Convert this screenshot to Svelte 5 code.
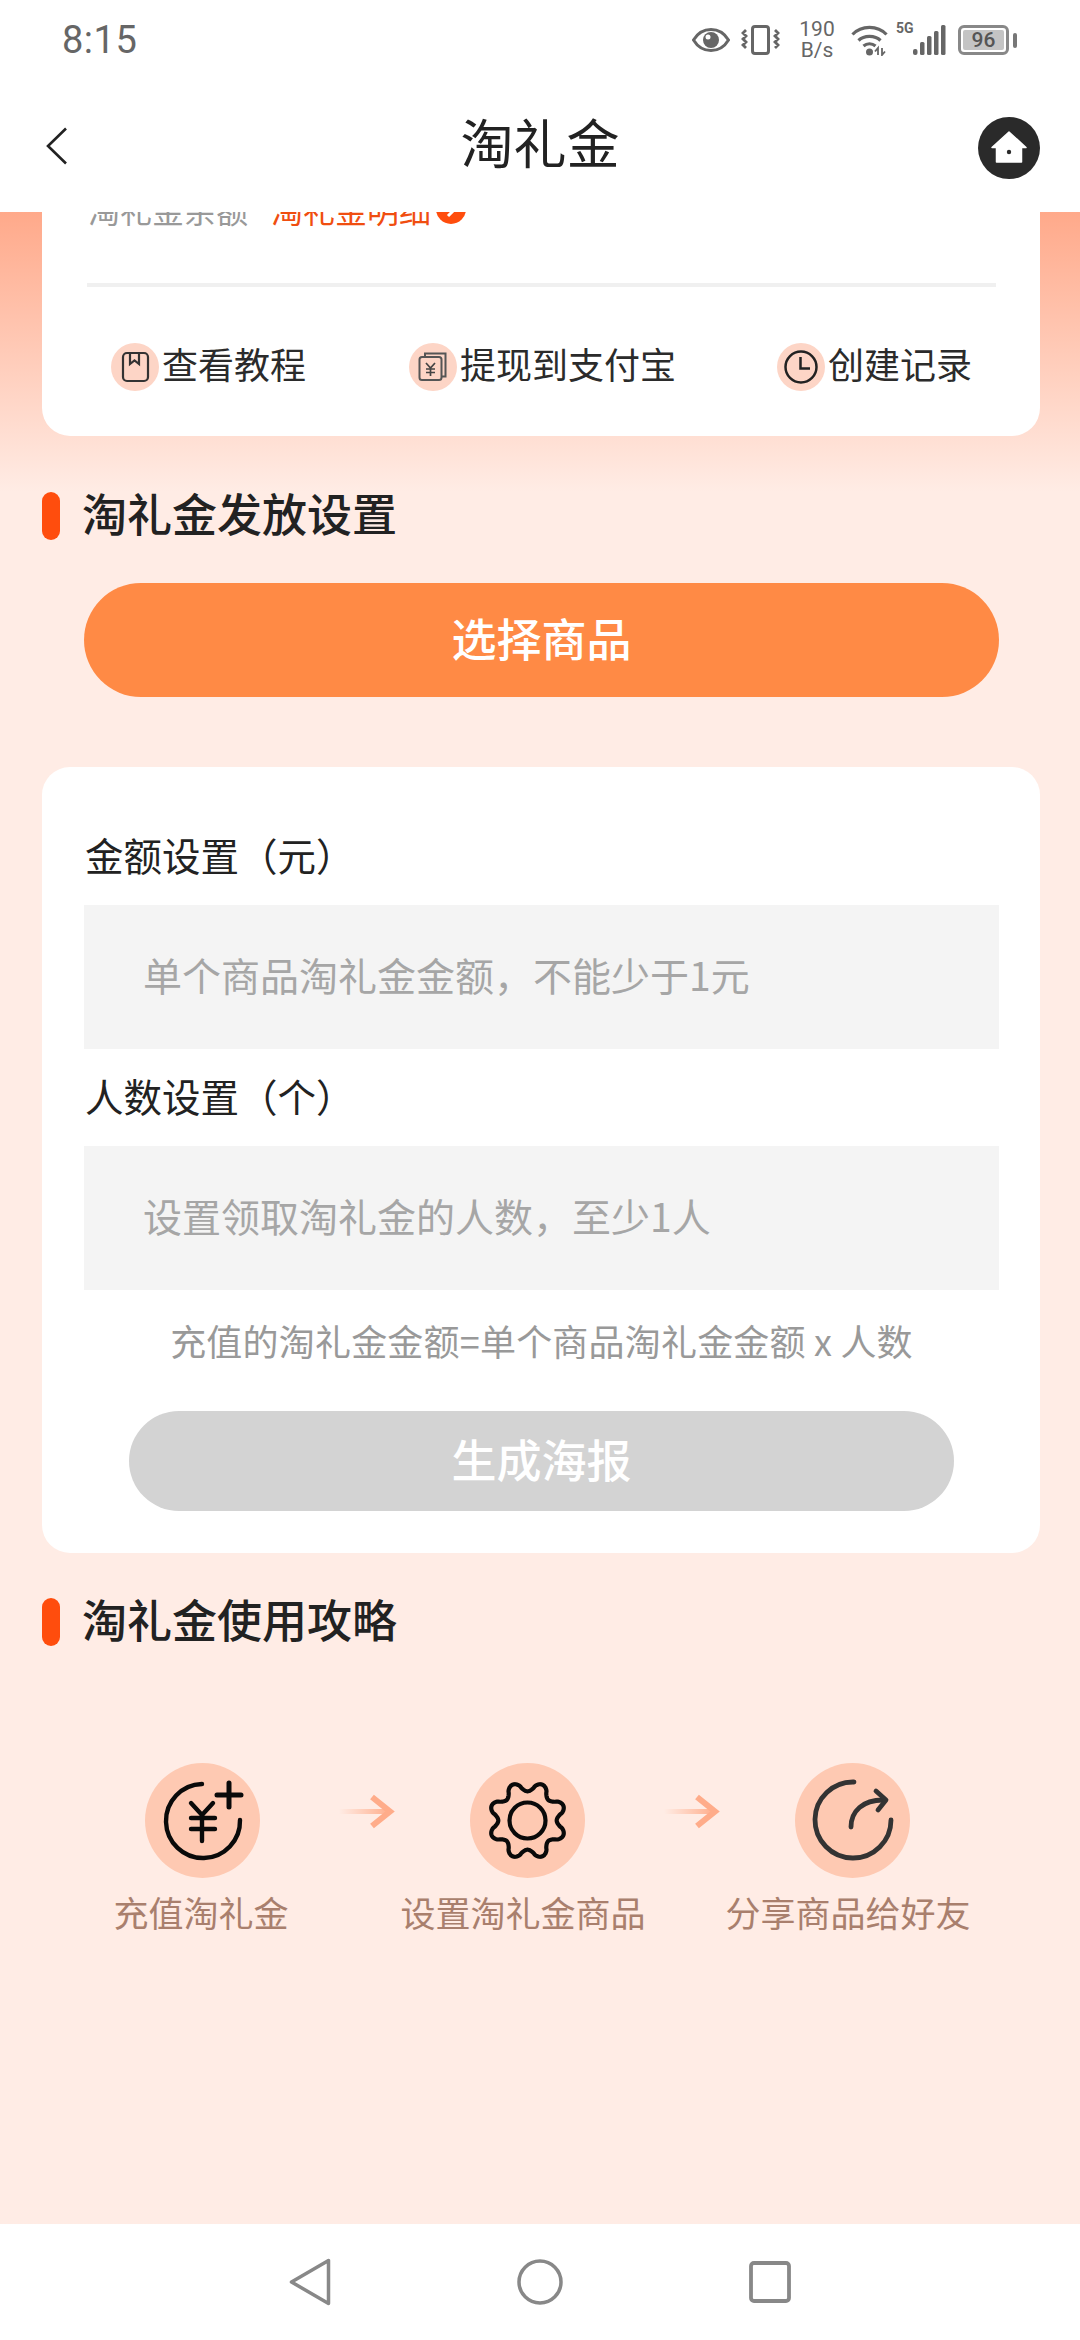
<script>
  const gearPoints = [];
  for (let i = 0; i < 240; i++) {
    const t = (i / 240) * Math.PI * 2;
    const c = Math.cos(8 * (t - Math.PI / 8));
    const r = 34 + 4.8 * Math.sign(c) * Math.pow(Math.abs(c), 0.75);
    gearPoints.push(`${(57.5 + r * Math.cos(t)).toFixed(2)} ${(57.5 + r * Math.sin(t)).toFixed(2)}`);
  }
  const gear = 'M' + gearPoints.join('L') + 'Z';
</script>

<div class="page">
  <header class="top">
    <div class="status">
      <span class="time">8:15</span>
      <div class="sys">
        <svg class="eye" viewBox="0 0 38 24" width="38" height="24"><path d="M1.5 12C6 4.5 12 1.5 19 1.5S32 4.500 36.500 12C32 19.500 26 22.500 19 22.500S6 19.500 1.500 12Z" fill="none" stroke="#666" stroke-width="3"/><circle cx="19" cy="12" r="8" fill="#666"/><circle cx="16" cy="9" r="2.500" fill="#fff"/></svg>
        <svg class="vib" viewBox="0 0 39 30" width="39" height="30"><rect x="11.500" y="1.500" width="16" height="27" rx="2.500" fill="none" stroke="#666" stroke-width="3"/><path d="M5 5l-3 3 3 3-3 3 3 3-3 3 3 3M34 5l3 3-3 3 3 3-3 3 3 3-3 3" fill="none" stroke="#666" stroke-width="2.800"/></svg>
        <div class="speed"><span>190</span><span>B/s</span></div>
        <svg class="wifi" viewBox="0 0 37 31" width="37" height="31"><path d="M1.500 9.500C10.500 0 26.500 0 35.500 9.500M7.500 15.500C13 10 24 10 29.500 15.500M12.500 21C16 18 21 18 24.500 21" fill="none" stroke="#666" stroke-width="3.200"/><circle cx="18.500" cy="27" r="3.500" fill="#666"/><path d="M27 30V23l-3 3.500M31 23v7l3-3.500" fill="none" stroke="#666" stroke-width="1.800"/></svg>
        <span class="five">5G</span>
        <svg class="signal" viewBox="0 0 33 30" width="33" height="30"><g fill="#666"><rect x="0" y="24" width="4.500" height="6" rx="2"/><rect x="7" y="17" width="4.500" height="13" rx="1.500"/><rect x="14" y="11" width="4.500" height="19" rx="1.500"/><rect x="21" y="6" width="4.500" height="24" rx="1.500"/><rect x="28" y="0" width="4.500" height="30" rx="1.500"/></g></svg>
        <div class="battery"><span>96</span></div>
        <i class="tip"></i>
      </div>
    </div>
    <nav class="bar">
      <svg class="back" viewBox="0 0 22 38" width="22" height="38"><path d="M20 1.500L2 19l18 17.500" fill="none" stroke="#222" stroke-width="2.600"/></svg>
      <h1>淘礼金</h1>
      <svg class="home" viewBox="0 0 62 62" width="62" height="62"><circle cx="31" cy="31" r="31" fill="#2a2a2a"/><path d="M31 15L48 30.500H43.500V45H18.500V30.500H14Z" fill="#fff" stroke="#fff" stroke-width="1.500" stroke-linejoin="round"/><circle cx="31" cy="35" r="2.200" fill="#2a2a2a"/></svg>
    </nav>
  </header>

  <main class="content">
    <section class="card balance">
      <div class="ledger">
        <span class="muted">淘礼金余额</span>
        <span class="link">淘礼金明细</span>
        <svg class="go" viewBox="0 0 30 30" width="30" height="30"><circle cx="15" cy="15" r="15" fill="#ff4d0d"/><path d="M12 8l7 7-7 7" fill="none" stroke="#fff" stroke-width="3"/></svg>
      </div>
      <div class="divider"></div>
      <div class="actions">
        <div class="action first">
          <svg viewBox="0 0 48 48" width="48" height="48"><circle cx="24" cy="24" r="24" fill="#fdd5c6"/><rect x="12" y="10" width="25" height="28" rx="4" fill="none" stroke="#333" stroke-width="2.200"/><path d="M19 10v11l4.500-3.500 4.500 3.500V10" fill="none" stroke="#333" stroke-width="2.200"/></svg>
          <span>查看教程</span>
        </div>
        <div class="action second">
          <svg viewBox="0 0 48 48" width="48" height="48"><circle cx="24" cy="24" r="24" fill="#fdd5c6"/><rect x="10.500" y="14" width="22" height="23" rx="2.500" fill="none" stroke="#555" stroke-width="2"/><path d="M16 14v-3.500h20.500v23H32.500" fill="none" stroke="#555" stroke-width="2"/><path d="M17 20l4.500 5 4.500-5M21.500 25v8M17 26h9M17 29.500h9" fill="none" stroke="#444" stroke-width="1.700"/></svg>
          <span>提现到支付宝</span>
        </div>
        <div class="action third">
          <svg viewBox="0 0 48 48" width="48" height="48"><circle cx="24" cy="24" r="24" fill="#fdd5c6"/><circle cx="24" cy="24" r="15.500" fill="none" stroke="#222" stroke-width="2.500"/><path d="M23.500 14v11.500H33" fill="none" stroke="#222" stroke-width="2.500"/></svg>
          <span>创建记录</span>
        </div>
      </div>
    </section>

    <h2 class="heading first-heading">淘礼金发放设置</h2>
    <button class="pick">选择商品</button>

    <section class="card form">
      <p class="label">金额设置（元）</p>
      <div class="field">单个商品淘礼金金额，不能少于1元</div>
      <p class="label second-label">人数设置（个）</p>
      <div class="field">设置领取淘礼金的人数，至少1人</div>
      <p class="hint">充值的淘礼金金额=单个商品淘礼金金额 x 人数</p>
      <button class="make">生成海报</button>
    </section>

    <h2 class="heading second-heading">淘礼金使用攻略</h2>

    <div class="steps">
      <div class="step">
        <svg viewBox="0 0 115 115" width="115" height="115"><circle cx="57.500" cy="57.500" r="57.500" fill="#fec9b2"/><g fill="none" stroke="#0a0a0a" stroke-width="4.400" stroke-linecap="round"><path d="M57 21A37 37 0 1 0 95 57"/><path d="M46 40L57 52L68 40M57 52V78M46 55H70M46 66H70"/><path d="M72 32H96M84 20V44" stroke-width="5"/></g></svg>
        <span>充值淘礼金</span>
      </div>
      <svg class="arrow" viewBox="0 0 56 36" width="56" height="36"><defs><linearGradient id="fade"><stop offset="0" stop-color="#ffac8a" stop-opacity="0"/><stop offset="1" stop-color="#ffac8a"/></linearGradient></defs><rect x="0" y="15" width="52" height="5" fill="url(#fade)"/><path d="M33 3L51 17.500L33 32" fill="none" stroke="#ffac8a" stroke-width="6"/></svg>
      <div class="step shifted">
        <svg viewBox="0 0 115 115" width="115" height="115"><circle cx="57.500" cy="57.500" r="57.500" fill="#fec9b2"/><path d={gear} fill="none" stroke="#0a0a0a" stroke-width="4.200" stroke-linejoin="round"/><circle cx="57.500" cy="57.500" r="18" fill="none" stroke="#0a0a0a" stroke-width="4.200"/></svg>
        <span>设置淘礼金商品</span>
      </div>
      <svg class="arrow" viewBox="0 0 56 36" width="56" height="36"><rect x="0" y="15" width="52" height="5" fill="url(#fade)"/><path d="M33 3L51 17.500L33 32" fill="none" stroke="#ffac8a" stroke-width="6"/></svg>
      <div class="step shifted">
        <svg viewBox="0 0 115 115" width="115" height="115"><circle cx="57.500" cy="57.500" r="57.500" fill="#fec9b2"/><g fill="none" stroke="#333" stroke-width="4.800" stroke-linecap="round"><path d="M59 19A38 38 0 1 0 96 57"/><path d="M56 64C56 48 68 37 88 37"/><path d="M81 28L91 37L83 47" stroke-linejoin="round"/></g></svg>
        <span>分享商品给好友</span>
      </div>
    </div>
  </main>

  <footer class="softkeys">
    <svg viewBox="0 0 42 48" width="42" height="48"><path d="M39.500 2.500V45.500L2.500 24Z" fill="none" stroke="#888" stroke-width="3.500" stroke-linejoin="round"/></svg>
    <svg viewBox="0 0 46 46" width="46" height="46"><circle cx="23" cy="23" r="21" fill="none" stroke="#888" stroke-width="3.500"/></svg>
    <svg viewBox="0 0 42 44" width="42" height="44"><rect x="2" y="3" width="38" height="38" rx="3" fill="none" stroke="#888" stroke-width="3.800"/></svg>
  </footer>
</div>

<style>
  :global(body) {
    margin: 0;
    background: #fff;
  }
  .page {
    width: 1080px;
    height: 2340px;
    display: flex;
    flex-direction: column;
    overflow: hidden;
    font-family: "Noto Sans CJK SC", "Noto Sans", sans-serif;
    color: #222;
  }
  .top {
    height: 212px;
    flex: none;
    background: #fff;
    position: relative;
    z-index: 2;
  }
  .status {
    height: 80px;
    display: flex;
    align-items: center;
    justify-content: space-between;
    padding: 0 63px 0 62px;
    box-sizing: border-box;
  }
  .time {
    font: 38px Roboto, sans-serif;
    color: #666;
    letter-spacing: 0.5px;
  }
  .sys {
    display: flex;
    align-items: center;
    height: 40px;
    color: #666;
  }
  .sys svg { display: block; flex: none; }
  .vib { margin-left: 11px; }
  .speed {
    margin-left: 18px;
    width: 38px;
    display: flex;
    flex-direction: column;
    align-items: center;
    font: 21px/21px Roboto, sans-serif;
  }
  .wifi { margin-left: 15px; }
  .five {
    margin-left: 8px;
    align-self: flex-start;
    font: bold 14px/16px Roboto, sans-serif;
    width: 17px;
  }
  .battery {
    margin-left: 12px;
    width: 51px;
    height: 30px;
    box-sizing: border-box;
    border: 3px solid #888;
    border-radius: 6px;
    padding: 2px;
    display: flex;
  }
  .battery span {
    flex: 1;
    background: #c4c4c4;
    border-radius: 2px;
    font: 500 21px/20px Roboto, sans-serif;
    text-align: center;
    color: #555;
  }
  .tip {
    margin-left: 4px;
    width: 4px;
    height: 15px;
    background: #777;
    border-radius: 2px;
  }
  .bar {
    height: 132px;
    display: flex;
    align-items: center;
    justify-content: space-between;
    padding: 0 40px 0 46px;
    position: relative;
  }
  .home { margin-top: 4px; }
  h1 {
    position: absolute;
    left: 0;
    right: 0;
    top: 26px;
    margin: 0;
    text-align: center;
    font-size: 53px;
    line-height: 70px;
    font-weight: 400;
    color: #222;
  }
  .content {
    flex: 1;
    min-height: 0;
    overflow: hidden;
    background: linear-gradient(#ffa98a 0, #ffece5 280px);
    padding: 0 40px 0 42px;
  }
  .card {
    background: #fff;
    border-radius: 28px;
  }
  .balance {
    margin-top: -60px;
    height: 284px;
    box-sizing: border-box;
    padding: 17px 44px 0 45px;
  }
  .ledger {
    height: 40px;
    display: flex;
    align-items: center;
    font-size: 32px;
    line-height: 40px;
    margin: 20px 0 0 1px;
  }
  .muted { color: #999; }
  .link { color: #f04e10; margin-left: 23px; }
  .go { margin-left: 5px; }
  .divider {
    margin-top: 54px;
    height: 4px;
    background: #f0f0f0;
  }
  .actions {
    display: flex;
    margin-top: 56px;
    height: 48px;
  }
  .action {
    display: flex;
    align-items: center;
    gap: 3px;
    font-size: 36px;
    line-height: 48px;
    color: #2b2b2b;
  }
  .action svg { flex: none; }
  .action span { padding-bottom: 8px; }
  .first { margin-left: 24px; }
  .second { margin-left: 103px; }
  .third { margin-left: 101px; }
  .heading {
    margin: 0;
    height: 48px;
    display: flex;
    align-items: center;
    font-size: 45px;
    font-weight: 500;
    line-height: 42px;
    color: #222;
    padding-left: 40px;
    padding-bottom: 6px;
    box-sizing: border-box;
    position: relative;
  }
  .heading::before {
    content: "";
    position: absolute;
    left: 0;
    top: 0;
    width: 18px;
    height: 48px;
    border-radius: 9px;
    background: #ff4d0d;
  }
  .first-heading { margin-top: 56px; }
  .second-heading { margin-top: 45px; }
  button {
    display: block;
    border: 0;
    padding: 0 0 5px;
    font-family: inherit;
    color: #fff;
    font-weight: 500;
    font-size: 45px;
    text-align: center;
  }
  .pick {
    margin: 43px 0 0 42px;
    width: 915px;
    height: 114px;
    border-radius: 57px;
    background: #ff8a45;
  }
  .form {
    margin-top: 70px;
    height: 786px;
    box-sizing: border-box;
    padding: 65px 41px 0 42px;
  }
  .label {
    margin: 0 0 23px 1px;
    font-size: 38.500px;
    line-height: 44px;
    height: 50px;
    color: #222;
  }
  .second-label { margin-top: 24px; }
  .field {
    height: 144px;
    padding-left: 59px;
    background: #f4f4f4;
    font-size: 39px;
    line-height: 138px;
    color: #a6a6a6;
  }
  .hint {
    margin: 28px 0 0;
    text-align: center;
    font-size: 36px;
    letter-spacing: 0.2px;
    line-height: 44px;
    height: 50px;
    color: #999;
  }
  .make {
    margin: 43px 0 0 45px;
    width: 825px;
    height: 100px;
    border-radius: 50px;
    background: #d3d3d3;
  }
  .steps {
    display: flex;
    align-items: flex-start;
    margin-top: 117px;
    margin-left: 25px;
  }
  .step {
    width: 270px;
    flex: none;
    display: flex;
    flex-direction: column;
    align-items: center;
    font-size: 35px;
    line-height: 48px;
    color: #a97f6d;
  }
  .step svg { display: block; }
  .step span { margin-top: 10px; white-space: nowrap; margin-left: -2px; }
  .shifted span { margin-left: -8px; }
  .arrow {
    flex: none;
    margin: 31px 0 0 2px;
    width: 56px;
  }
  .arrow + .step { margin-left: -3px; }
  .softkeys {
    height: 116px;
    flex: none;
    background: #fff;
    display: flex;
    align-items: center;
    justify-content: center;
    gap: 186px;
  }
  .softkeys svg { display: block; }
</style>
